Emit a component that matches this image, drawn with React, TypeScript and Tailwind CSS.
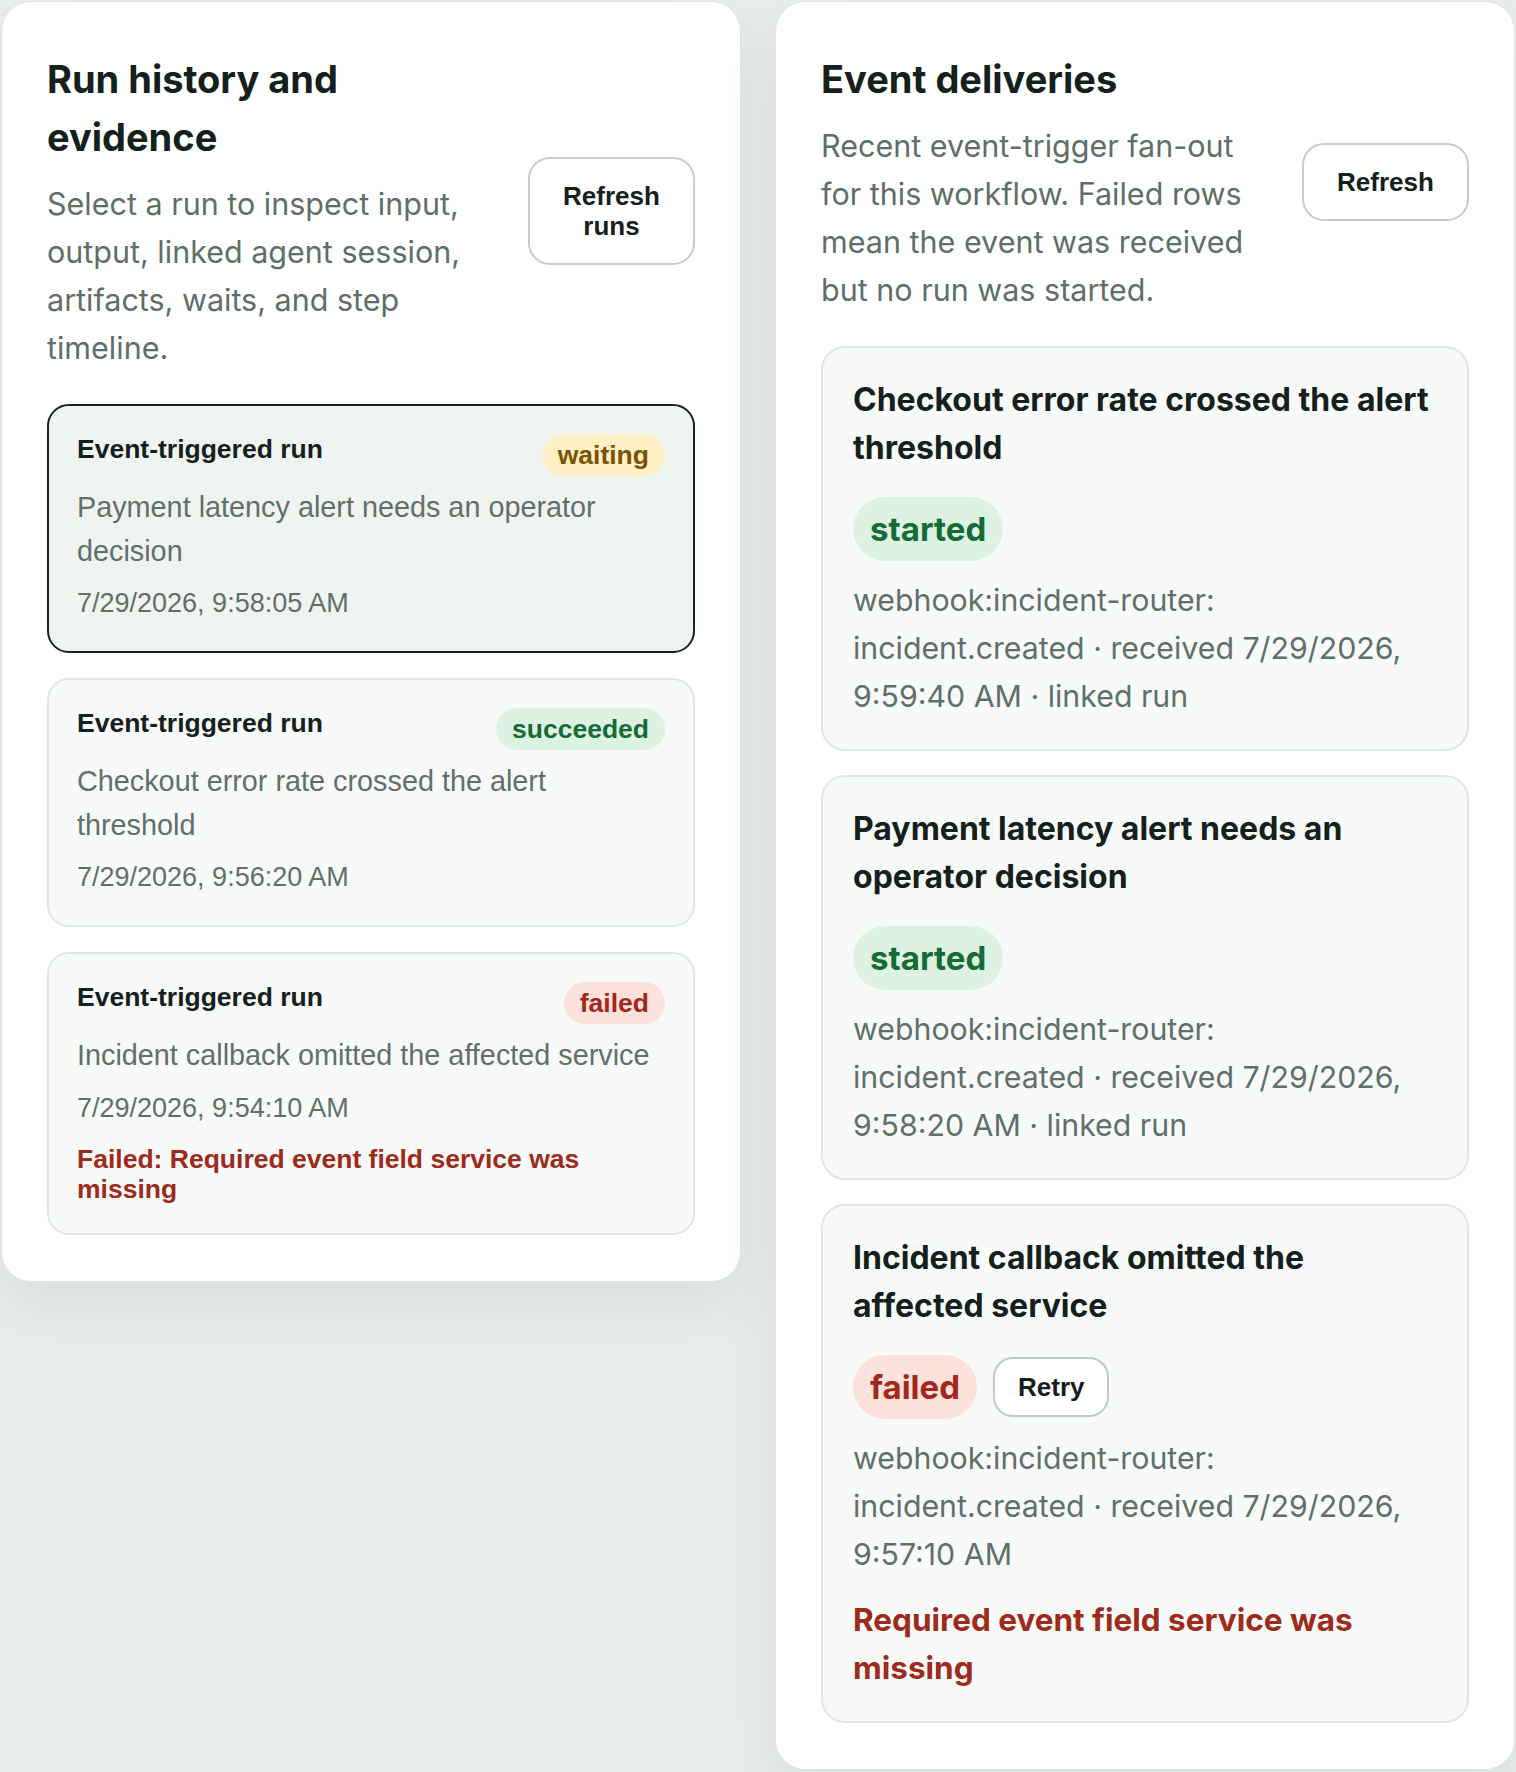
import React from "react";

type Run = {
  status: "waiting" | "succeeded" | "failed";
  summary: string;
  time: string;
  error?: string;
};

type Delivery = {
  title: string;
  status: "started" | "failed";
  meta: string;
  error?: string;
};

const runs: Run[] = [
  {
    status: "waiting",
    summary: "Payment latency alert needs an operator decision",
    time: "7/29/2026, 9:58:05 AM",
  },
  {
    status: "succeeded",
    summary: "Checkout error rate crossed the alert threshold",
    time: "7/29/2026, 9:56:20 AM",
  },
  {
    status: "failed",
    summary: "Incident callback omitted the affected service",
    time: "7/29/2026, 9:54:10 AM",
    error: "Failed: Required event field service was missing",
  },
];

const deliveries: Delivery[] = [
  {
    title: "Checkout error rate crossed the alert threshold",
    status: "started",
    meta: "webhook:incident-router: incident.created · received 7/29/2026, 9:59:40 AM · linked run",
  },
  {
    title: "Payment latency alert needs an operator decision",
    status: "started",
    meta: "webhook:incident-router: incident.created · received 7/29/2026, 9:58:20 AM · linked run",
  },
  {
    title: "Incident callback omitted the affected service",
    status: "failed",
    meta: "webhook:incident-router: incident.created · received 7/29/2026, 9:57:10 AM",
    error: "Required event field service was missing",
  },
];

const runBadge: Record<Run["status"], string> = {
  waiting: "bg-[#fdf0c6] text-[#7a5200]",
  succeeded: "bg-[#def2e4] text-[#156b35]",
  failed: "bg-[#fde1dc] text-[#a1281a]",
};

const deliveryBadge: Record<Delivery["status"], string> = {
  started: "bg-[#def2e4] text-[#156b35]",
  failed: "bg-[#fde1dc] text-[#a1281a]",
};

function RunCard({ run, selected }: { run: Run; selected: boolean }) {
  return (
    <button
      className={
        "w-full rounded-[22px] border-2 p-[28px] text-left font-['Liberation_Sans',Arial,sans-serif] " +
        (selected ? "border-[#17231e] bg-[#f0f4f1]" : "border-[#dfe7e3] bg-[#f8faf9]")
      }
    >
      <div className="flex items-start justify-between gap-4">
        <span className="text-[26.5px] font-bold leading-[30px] text-[#14201b]">Event-triggered run</span>
        <span className={"rounded-full px-[16px] py-[6px] text-[26.5px] font-bold leading-[30px] " + runBadge[run.status]}>
          {run.status}
        </span>
      </div>
      <div className="mt-[10px] text-[28.8px] leading-[43.5px] text-[#5f7069]">{run.summary}</div>
      <div className="mt-[10px] text-[27px] leading-[40px] text-[#5f7069]">{run.time}</div>
      {run.error && (
        <div className="mt-[16px] text-[26.5px] font-bold leading-[30.5px] text-[#9d2a1b]">{run.error}</div>
      )}
    </button>
  );
}

function DeliveryCard({ item }: { item: Delivery }) {
  return (
    <div className="rounded-[24px] border-2 border-[#dfe7e3] bg-[#f8faf9] px-[30px] pt-[28px] pb-[29px]">
      <h3 className="text-[32px] font-bold leading-[48px] text-[#14201b]">{item.title}</h3>
      <div className="mt-[25px] flex items-center gap-4">
        <span className={"rounded-full px-[17px] py-[8px] text-[33px] font-bold leading-[48px] " + deliveryBadge[item.status]}>
          {item.status}
        </span>
        {item.status === "failed" && (
          <button className="rounded-[20px] border-2 border-[#bfcac5] bg-white px-[23px] py-[13px] font-['Liberation_Sans',Arial,sans-serif] text-[26px] font-bold leading-[30px] text-[#14201b]">
            Retry
          </button>
        )}
      </div>
      <p className="mt-[15px] text-[30.3px] leading-[48px] text-[#5f7069]">{item.meta}</p>
      {item.error && (
        <p className="mt-[18px] text-[31.5px] font-bold leading-[48px] text-[#9d2a1b]">{item.error}</p>
      )}
    </div>
  );
}

function PanelHeader({ title, text, action }: { title: string; text: string; action: string }) {
  return (
    <div className="flex items-center gap-10">
      <div className="min-w-0 flex-1">
        <h2 className="text-[38px] font-bold leading-[58px] text-[#14201b]">{title}</h2>
        <p className="mt-[14px] text-[30.5px] leading-[48px] text-[#5d6f68]">{text}</p>
      </div>
      <button className="w-[167px] shrink-0 rounded-[22px] border-2 border-[#c3ceca] bg-white px-[28px] py-[22px] text-center font-['Liberation_Sans',Arial,sans-serif] text-[26px] font-bold leading-[30px] text-[#14201b]">
        {action}
      </button>
    </div>
  );
}

export default function App() {
  return (
    <div className="min-h-screen bg-[#eaeeeb] px-px pt-px font-['Inter',sans-serif]">
      <div className="grid grid-cols-2 items-start gap-[34px]">
        <section className="rounded-[30px] border border-[#dfe6e2] bg-white px-[45px] pt-[48px] pb-[46px] shadow-[0_24px_60px_rgba(30,50,40,0.08)]">
          <PanelHeader
            title="Run history and evidence"
            text="Select a run to inspect input, output, linked agent session, artifacts, waits, and step timeline."
            action="Refresh runs"
          />
          <div className="mt-[32px] flex flex-col gap-[25px]">
            {runs.map((run, i) => (
              <RunCard key={i} run={run} selected={i === 0} />
            ))}
          </div>
        </section>

        <section className="rounded-[30px] border border-[#dfe6e2] bg-white px-[45px] pt-[48px] pb-[46px] shadow-[0_24px_60px_rgba(30,50,40,0.08)]">
          <PanelHeader
            title="Event deliveries"
            text="Recent event-trigger fan-out for this workflow. Failed rows mean the event was received but no run was started."
            action="Refresh"
          />
          <div className="mt-[32px] flex flex-col gap-[24px]">
            {deliveries.map((d, i) => (
              <DeliveryCard key={i} item={d} />
            ))}
          </div>
        </section>
      </div>
    </div>
  );
}
